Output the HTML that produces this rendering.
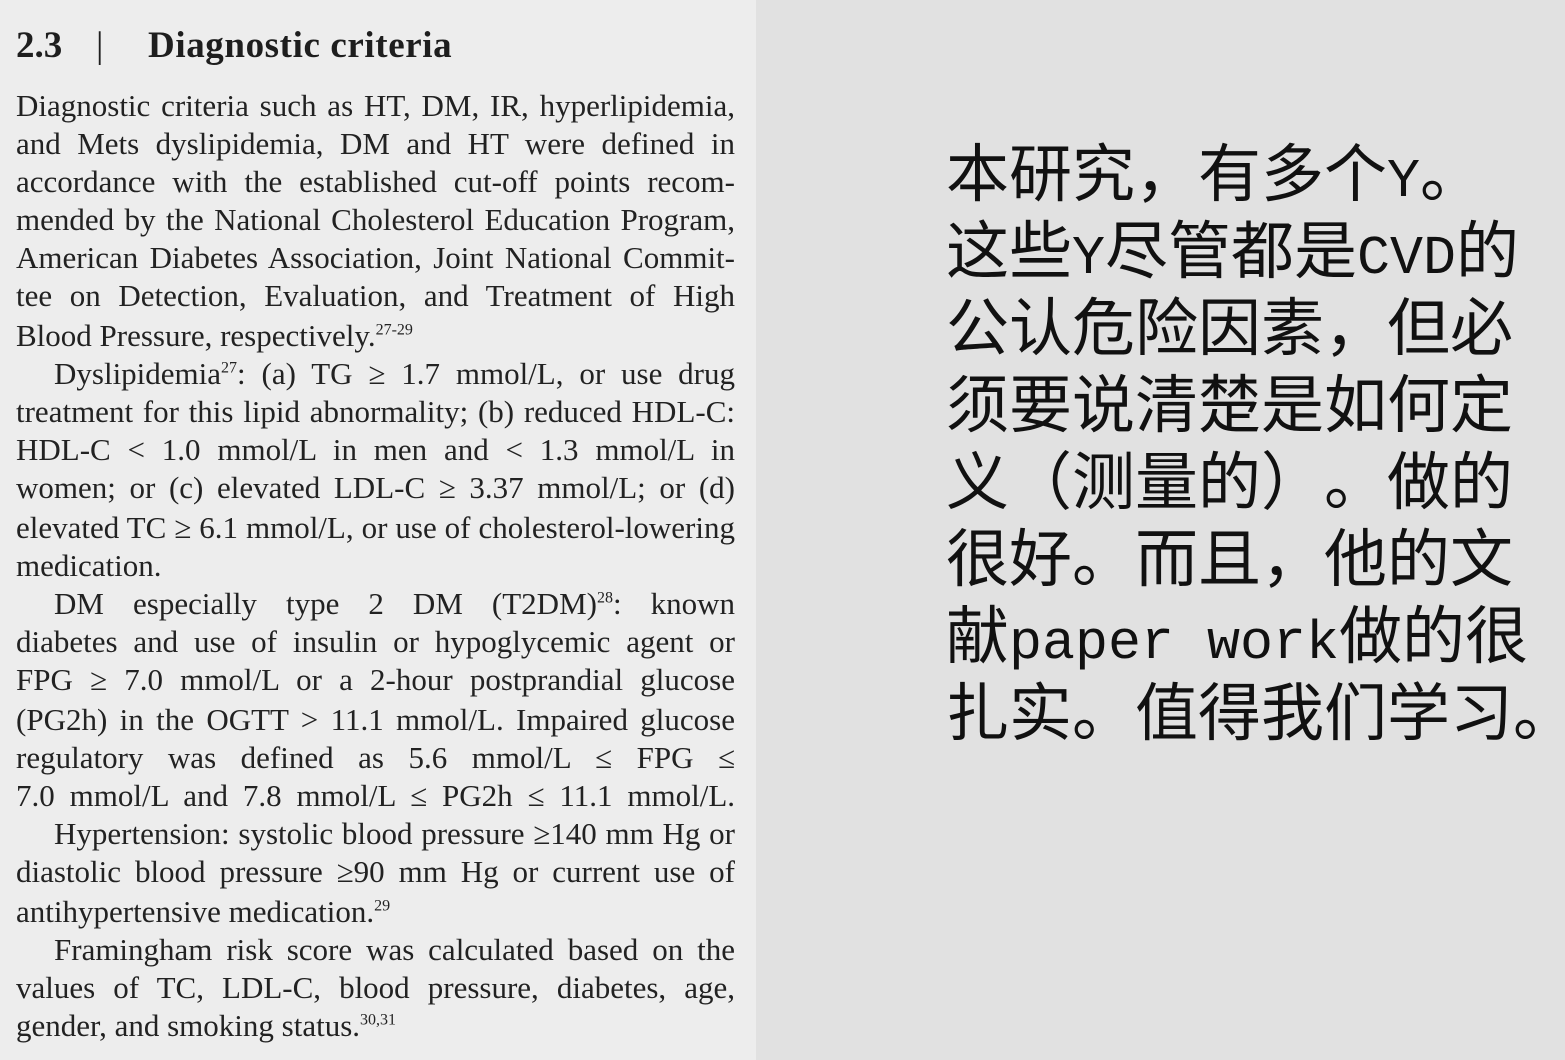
<!DOCTYPE html>
<html><head><meta charset="utf-8"><style>
html,body{margin:0;padding:0;}
body{width:1565px;height:1060px;overflow:hidden;background:#e1e1e1;position:relative;}
#left{position:absolute;left:0;top:0;width:756px;height:1060px;background:#ededed;}
.h{position:absolute;top:24px;font:bold 37px "Liberation Serif",serif;color:#1e1e1e;white-space:pre;}
.l{position:absolute;left:16px;width:719px;font:31px "Liberation Serif",serif;color:#222;text-align:justify;text-align-last:justify;white-space:nowrap;height:38px;line-height:38px;letter-spacing:0px}
.l.n{text-align-last:left}
sup{font-size:16px;line-height:0}
.r{position:absolute;left:946px;font:63px "Noto Sans CJK SC",sans-serif;color:#111;white-space:nowrap;line-height:77px;text-spacing-trim:space-all;font-feature-settings:"halt" 0,"chws" 0}
.m{font-family:"Liberation Mono","DejaVu Sans Mono",monospace;font-size:55px}
</style></head><body>
<div id="left">
<div class="h" style="left:16px">2.3</div>
<div class="h" style="left:96px;font-weight:normal">|</div>
<div class="h" style="left:148px;letter-spacing:0.6px">Diagnostic criteria</div>
<div class="l" style="top:87px">Diagnostic criteria such as HT, DM, IR, hyperlipidemia,</div>
<div class="l" style="top:125px">and Mets dyslipidemia, DM and HT were defined in</div>
<div class="l" style="top:163px">accordance with the established cut-off points recom-</div>
<div class="l" style="top:201px">mended by the National Cholesterol Education Program,</div>
<div class="l" style="top:239px">American Diabetes Association, Joint National Commit-</div>
<div class="l" style="top:277px">tee on Detection, Evaluation, and Treatment of High</div>
<div class="l n" style="top:317px">Blood Pressure, respectively.<sup>27-29</sup></div>
<div class="l" style="top:355px;left:54px;width:681px">Dyslipidemia<sup>27</sup>: (a) TG ≥ 1.7 mmol/L, or use drug</div>
<div class="l" style="top:393px">treatment for this lipid abnormality; (b) reduced HDL-C:</div>
<div class="l" style="top:431px">HDL-C &lt; 1.0 mmol/L in men and &lt; 1.3 mmol/L in</div>
<div class="l" style="top:469px">women; or (c) elevated LDL-C ≥ 3.37 mmol/L; or (d)</div>
<div class="l" style="top:509px">elevated TC ≥ 6.1 mmol/L, or use of cholesterol-lowering</div>
<div class="l n" style="top:547px">medication.</div>
<div class="l" style="top:585px;left:54px;width:681px">DM especially type 2 DM (T2DM)<sup>28</sup>: known</div>
<div class="l" style="top:623px">diabetes and use of insulin or hypoglycemic agent or</div>
<div class="l" style="top:661px">FPG ≥ 7.0 mmol/L or a 2-hour postprandial glucose</div>
<div class="l" style="top:701px">(PG2h) in the OGTT &gt; 11.1 mmol/L. Impaired glucose</div>
<div class="l" style="top:739px">regulatory was defined as 5.6 mmol/L ≤ FPG ≤</div>
<div class="l" style="top:777px">7.0 mmol/L and 7.8 mmol/L ≤ PG2h ≤ 11.1 mmol/L.</div>
<div class="l" style="top:815px;left:54px;width:681px">Hypertension: systolic blood pressure ≥140 mm Hg or</div>
<div class="l" style="top:853px">diastolic blood pressure ≥90 mm Hg or current use of</div>
<div class="l n" style="top:893px">antihypertensive medication.<sup>29</sup></div>
<div class="l" style="top:931px;left:54px;width:681px">Framingham risk score was calculated based on the</div>
<div class="l" style="top:969px">values of TC, LDL-C, blood pressure, diabetes, age,</div>
<div class="l n" style="top:1007px">gender, and smoking status.<sup>30,31</sup></div>
</div>
<div class="r" style="top:131px">本研究，有多个<span class="m">Y</span>。</div>
<div class="r" style="top:208px">这些<span class="m">Y</span>尽管都是<span class="m">CVD</span>的</div>
<div class="r" style="top:285px">公认危险因素，但必</div>
<div class="r" style="top:362px">须要说清楚是如何定</div>
<div class="r" style="top:439px">义（测量的）。做的</div>
<div class="r" style="top:516px">很好。而且，他的文</div>
<div class="r" style="top:593px">献<span class="m">paper work</span>做的很</div>
<div class="r" style="top:670px">扎实。值得我们学习。</div>
<script>
document.querySelectorAll('.l').forEach(function(e){
  var ls=0, w=e.clientWidth;
  while(e.scrollWidth>w+1 && ls>-3){ls-=0.1;e.style.letterSpacing=ls+'px';}
});
</script>
</body></html>
